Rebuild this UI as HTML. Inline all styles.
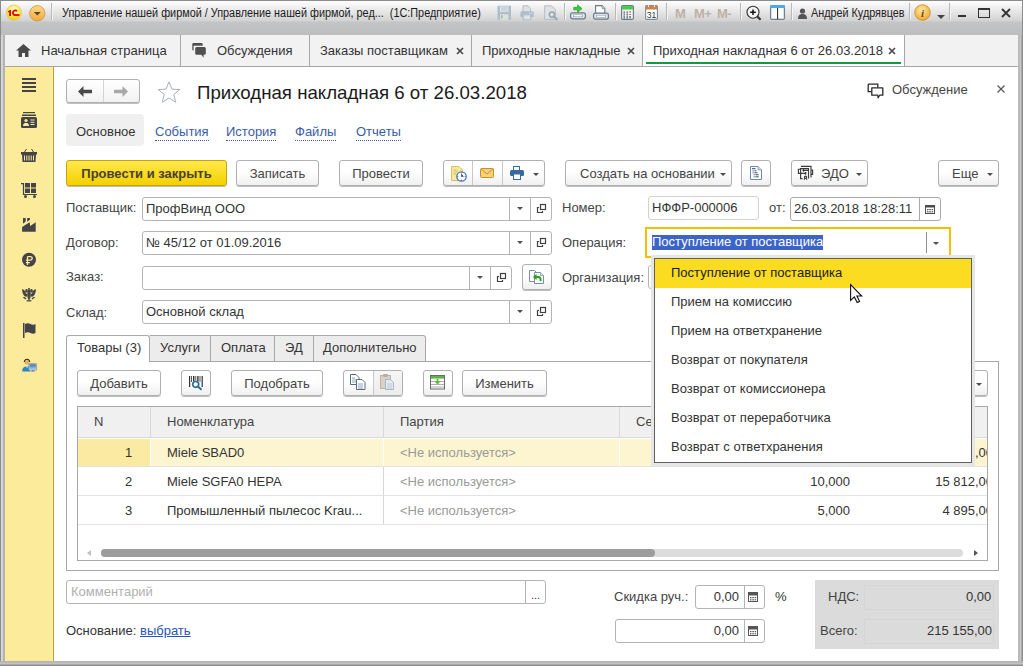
<!DOCTYPE html>
<html><head><meta charset="utf-8">
<style>
*{box-sizing:border-box;margin:0;padding:0}
html,body{width:1023px;height:666px;overflow:hidden;background:#fff}
body{position:relative;font-family:"Liberation Sans",sans-serif;font-size:13px;color:#444}
.a{position:absolute}
svg{position:absolute;overflow:visible}
.t{position:absolute;white-space:nowrap;line-height:16px}
#frame{left:0;top:35px;width:1023px;height:631px;background:linear-gradient(90deg,#8c8c8c 0,#8c8c8c 1px,#d9d9d9 1px,#d0d0d0 3px,#b4b4b4 3px,#b4b4b4 5px,transparent 5px,transparent 1018px,#b4b4b4 1018px,#c8c8c8 1021px,#8c8c8c 1022px)}
#frameb{left:0;top:661px;width:1023px;height:5px;background:linear-gradient(#b0b0b0,#c6c6c6 3px,#8c8c8c 4px)}
#titlebar{left:0;top:0;width:1023px;height:35px;border-left:1px solid #8c8c8c;border-right:1px solid #8c8c8c;background:linear-gradient(#8c8c8c 0,#8c8c8c 1px,#fdfdfd 1px,#f3f3f3 6px,#d2d2d2 21px,#c4c5c7 22px,#bcbdbf 35px)}
#tabbar{left:5px;top:35px;width:1013px;height:32px;background:#f2f2f2;border-bottom:1px solid #a6a6a6}
#content{left:5px;top:67px;width:1013px;height:594px;background:#fff}
#sidebar{left:5px;top:67px;width:49px;height:594px;background:linear-gradient(90deg,#fbeb9a 47px,#fdefb0 47px);border-right:1px solid #b9a22a}
.tabsep{position:absolute;top:35px;width:1px;height:31px;background:#a8a8a8}
.tsep{position:absolute;top:3px;width:1px;height:17px;background:#b8b8b8;box-shadow:1px 0 0 #f4f4f4}
.btn{position:absolute;height:26px;border:1px solid #b0b0b0;border-radius:3px;background:linear-gradient(#fff 0,#fff 45%,#f0f0f0 100%);box-shadow:0 1px 0 rgba(0,0,0,.25);text-align:center;line-height:25px;color:#444;white-space:nowrap}
.inp{position:absolute;height:24px;border:1px solid #b4b4b4;border-radius:3px;background:#fff;line-height:22px;padding-left:3px;color:#333;white-space:nowrap;overflow:hidden}
.vs{position:absolute;top:0;width:1px;height:22px;background:#b4b4b4}
.lbl{position:absolute;white-space:nowrap;line-height:16px;color:#444}
.link{color:#3a5ca8}
.dl{border-bottom:1px dotted #3a5ca8}
.ic{fill:#444448}
.dd{position:absolute;width:0;height:0;border-left:3px solid transparent;border-right:3px solid transparent;border-top:3px solid #4d4d4d}
.item{position:absolute;left:671px;white-space:nowrap;line-height:16px;color:#333}
.cell{position:absolute;white-space:nowrap;line-height:18px;color:#333}
</style></head><body>
<div id="titlebar" class="a"></div>
<div id="frame" class="a"></div>
<div id="tabbar" class="a"></div>
<div id="content" class="a"></div>
<div id="sidebar" class="a"></div>
<div id="frameb" class="a"></div>

<!-- ===== TITLE BAR ===== -->
<svg style="left:4px;top:4px" width="20" height="18" viewBox="0 0 20 18"><defs><radialGradient id="g1" cx="50%" cy="30%" r="70%"><stop offset="0" stop-color="#fffbd0"/><stop offset=".6" stop-color="#fbe84a"/><stop offset="1" stop-color="#f2d000"/></radialGradient></defs><circle cx="9.9" cy="8.6" r="7.5" fill="url(#g1)" stroke="#dcc25a" stroke-width=".7"/><path d="M3.9 7.2 L6 5.9 H7 V11.9 H5.2 V8 L3.9 8.6 Z" fill="#e00000"/><path d="M12.9 7.2 A2.3 2.3 0 1 0 10.4 10.9" fill="none" stroke="#e00000" stroke-width="1.7"/><rect x="9.6" y="10.1" width="5.9" height="1.8" fill="#e00000"/></svg>
<svg style="left:29px;top:5px" width="17" height="17" viewBox="0 0 17 17">
 <defs><linearGradient id="g2" x1="0" y1="0" x2="0" y2="1"><stop offset="0" stop-color="#ffd88a"/><stop offset="1" stop-color="#f5a83a"/></linearGradient></defs>
 <circle cx="8.3" cy="8.3" r="7.7" fill="url(#g2)" stroke="#c8963c" stroke-width=".8"/>
 <path d="M4.8 7 L11.8 7 L8.3 10.6 Z" fill="#5a4630"/>
</svg>
<div class="tsep" style="left:51px"></div>
<div class="t" style="left:62px;top:5px;font-size:12.5px;color:#1a1a1a;transform:scaleX(0.868);transform-origin:0 0">Управление нашей фирмой / Управление нашей фирмой, ред...&nbsp; (1С:Предприятие)</div>

<!-- toolbar icons -->
<svg style="left:497px;top:5px" width="15" height="16" viewBox="0 0 15 16"><rect x="0.5" y="0.8" width="13.5" height="14" fill="#aebdcc"/><rect x="3" y="1.5" width="8.5" height="5.3" fill="#e6e6e6"/><path d="M4 3 H10.5 M4 5 H10.5" stroke="#aebdcc" stroke-width=".9"/><rect x="3" y="9.3" width="8.5" height="5.5" fill="#d8e4d8"/><rect x="4" y="10.3" width="1.6" height="3" fill="#9fb0c0"/></svg>
<svg style="left:520px;top:5px" width="15" height="16" viewBox="0 0 15 16"><path d="M3 0.8 H8 L10.5 3.3 V7 H3 Z" fill="#e2e2e2" stroke="#aebdcc" stroke-width="1"/><rect x="0.4" y="6.3" width="13.4" height="6" rx="1.5" fill="#aebdcc"/><rect x="9" y="7.6" width="1.3" height=".9" fill="#eef2f5"/><rect x="11" y="7.6" width="1.3" height=".9" fill="#eef2f5"/><rect x="3.2" y="9.8" width="7.6" height="5" fill="#e2e2e2" stroke="#aebdcc" stroke-width="1"/></svg>
<svg style="left:544px;top:5px" width="16" height="16" viewBox="0 0 16 16"><path d="M0.7 0.8 H7.5 L11.3 4.6 V14.3 H0.7 Z" fill="#e2e2e2" stroke="#aebdcc" stroke-width="1"/><circle cx="7.9" cy="9.6" r="2.6" fill="#e2e2e2" stroke="#98a6b2" stroke-width="1.6"/><path d="M9.8 11.5 L13.4 14.8" stroke="#98a6b2" stroke-width="1.9"/></svg>
<div class="tsep" style="left:564px"></div>
<svg style="left:569px;top:4px" width="18" height="17" viewBox="0 0 18 17"><path d="M4.8 3.4 H8.6 V1 L13 4.6 L8.6 8.2 V5.8 H4.8 Z" fill="#34d034" stroke="#1e9a1e" stroke-width=".7"/><rect x="1.6" y="8.8" width="14.8" height="6" rx="2" fill="#e4e8ec" stroke="#6a7888" stroke-width="1.2"/><rect x="4.3" y="10.8" width="9.4" height="2" fill="#fff" stroke="#8a98a6" stroke-width=".6"/></svg>
<svg style="left:592px;top:4px" width="18" height="17" viewBox="0 0 18 17"><path d="M3.6 1.6 H10 L12.8 4.4 V9.5 H3.6 Z" fill="#fff" stroke="#6a7888" stroke-width="1.1"/><path d="M10 1.6 V4.4 H12.8" fill="#cfd8e0" stroke="#6a7888" stroke-width=".7"/><rect x="1.6" y="9.2" width="14.8" height="6" rx="2" fill="#e4e8ec" stroke="#6a7888" stroke-width="1.2"/><rect x="4.3" y="11.2" width="9.4" height="2" fill="#fff" stroke="#8a98a6" stroke-width=".6"/></svg>
<div class="tsep" style="left:615px"></div>
<svg style="left:621px;top:5px" width="13" height="15" viewBox="0 0 13 15"><rect x="0.6" y="0.6" width="11.8" height="13.8" rx="1.2" fill="#eef2f6" stroke="#6a7a8a" stroke-width="1.1"/><rect x="1.1" y="1.1" width="10.8" height="3.4" fill="#44cc44"/><rect x="2.5" y="6.6" width="1.5" height="1" fill="#3a3a3a"/><rect x="5.5" y="6.6" width="1.5" height="1" fill="#3a3a3a"/><rect x="2.5" y="8.6" width="1.5" height="1" fill="#3a3a3a"/><rect x="5.5" y="8.6" width="1.5" height="1" fill="#3a3a3a"/><rect x="2.5" y="10.6" width="1.5" height="1" fill="#3a3a3a"/><rect x="5.5" y="10.6" width="1.5" height="1" fill="#3a3a3a"/><rect x="2.5" y="12.4" width="1.5" height="1" fill="#3a3a3a"/><rect x="5.5" y="12.4" width="1.5" height="1" fill="#3a3a3a"/><rect x="8.5" y="6.1" width="1.1" height="1.7" fill="#e03030"/><rect x="8.5" y="9" width="1.1" height="1" fill="#3a3a3a"/><rect x="8.5" y="11" width="1.1" height="2.2" fill="#3a3a3a"/></svg>
<svg style="left:645px;top:5px" width="13" height="15" viewBox="0 0 13 15"><rect x="0.6" y="0.6" width="11.8" height="13.8" rx="1.2" fill="#fff" stroke="#7a8a9a" stroke-width="1.1"/><path d="M0.6 4.6 V1.8 C0.6 1.1 1.1 0.6 1.8 0.6 H11.2 C11.9 0.6 12.4 1.1 12.4 1.8 V4.6 Z" fill="#c8844c"/><rect x="3" y="0.3" width="1" height="1.8" fill="#fff"/><rect x="9" y="0.3" width="1" height="1.8" fill="#fff"/><text x="6.5" y="12.8" font-size="8.5" font-family="Liberation Sans" text-anchor="middle" fill="#333">31</text></svg>
<div class="tsep" style="left:666px"></div>
<div class="t" style="left:675px;top:6px;font-size:13px;font-weight:bold;color:#bdb1a6">M</div>
<div class="t" style="left:694px;top:6px;font-size:13px;font-weight:bold;color:#bdb1a6;letter-spacing:-0.5px">M+</div>
<div class="t" style="left:717px;top:6px;font-size:13px;font-weight:bold;color:#bdb1a6;letter-spacing:-0.5px">M-</div>
<div class="tsep" style="left:740px"></div>
<svg style="left:746px;top:5px" width="16" height="16" viewBox="0 0 16 16"><circle cx="7" cy="7.2" r="6" fill="#f4f4f4" stroke="#333" stroke-width="1.1"/><path d="M4.2 7.2 H9.8 M7 4.4 V10" stroke="#111" stroke-width="1.5"/><path d="M11.2 11.4 L14.6 14.8" stroke="#333" stroke-width="2.2"/></svg>
<svg style="left:770px;top:5px" width="15" height="15" viewBox="0 0 15 15"><rect x="0.6" y="0.6" width="13.8" height="13.8" rx="1.2" fill="#fafafa" stroke="#6f7f8c" stroke-width="1.2"/><path d="M0 3 V1.5 C0 0.7 0.7 0 1.5 0 H13.5 C14.3 0 15 0.7 15 1.5 V3 Z" fill="#4ea6ec"/><rect x="7" y="3" width="1.1" height="11.4" fill="#3a3a3a"/></svg>
<div class="tsep" style="left:791px"></div>
<svg style="left:798px;top:8px" width="9" height="11" viewBox="0 0 9 11"><circle cx="4.5" cy="3" r="2.6" fill="#555"/><path d="M0 11 C0 7 2 6 4.5 6 C7 6 9 7 9 11 Z" fill="#555"/></svg>
<div class="t" style="left:811px;top:5px;font-size:12.5px;color:#222;transform:scaleX(0.865);transform-origin:0 0">Андрей Кудрявцев</div>
<div class="tsep" style="left:909px"></div>
<svg style="left:914px;top:4px" width="17" height="17" viewBox="0 0 17 17"><defs><radialGradient id="g3" cx="45%" cy="35%" r="65%"><stop offset="0" stop-color="#ffe9a8"/><stop offset="1" stop-color="#f0a82c"/></radialGradient></defs><circle cx="8.5" cy="8.5" r="7.8" fill="url(#g3)" stroke="#c48a2a" stroke-width=".8"/><text x="8.5" y="13" font-size="11" font-family="Liberation Serif" font-style="italic" font-weight="bold" text-anchor="middle" fill="#6a4a10">i</text></svg>
<div class="dd" style="left:937px;top:15px;border-left-width:4px;border-right-width:4px;border-top-width:4px;border-top-color:#444"></div>
<div class="tsep" style="left:949px"></div>
<div class="a" style="left:958px;top:15px;width:8px;height:2px;background:#333"></div>
<div class="a" style="left:978px;top:8px;width:12px;height:10px;border:1.5px solid #333;border-top-width:2px"></div>
<svg style="left:1001px;top:8px" width="10" height="10" viewBox="0 0 10 10"><path d="M1 1 L9 9 M9 1 L1 9" stroke="#333" stroke-width="1.8"/></svg>

<!-- ===== SECTION TABS ===== -->
<svg style="left:16px;top:44px" width="15" height="13" viewBox="0 0 15 13"><path d="M7.5 0 L15 6.5 H12.5 V13 H9 V9 H6 V13 H2.5 V6.5 H0 Z" fill="#4a4a4a"/></svg>
<div class="t" style="left:41px;top:43px;color:#333">Начальная страница</div>
<div class="tabsep" style="left:180px"></div>
<svg style="left:186px;top:38px" width="26" height="24" viewBox="0 0 26 24"><rect x="6.3" y="5" width="10.4" height="7.6" rx="1.3" fill="#505050"/><rect x="7.6" y="7.7" width="9.5" height="5.5" fill="#f2f2f2"/><rect x="8.3" y="8.1" width="12.4" height="9.5" rx="1.8" fill="#f2f2f2"/><rect x="9.2" y="9" width="10.6" height="7.7" rx="1.5" fill="#505050"/><path d="M14.8 16.3 L17.7 19.8 L17.5 16.3 Z" fill="#505050"/></svg>
<div class="t" style="left:217px;top:43px;color:#333">Обсуждения</div>
<div class="tabsep" style="left:309px"></div>
<div class="t" style="left:320px;top:43px;color:#333">Заказы поставщикам</div>
<svg style="left:456px;top:47px" width="8" height="8" viewBox="0 0 8 8"><path d="M1 1 L7 7 M7 1 L1 7" stroke="#4a4a4a" stroke-width="1.7"/></svg>
<div class="tabsep" style="left:471px"></div>
<div class="t" style="left:482px;top:43px;color:#333">Приходные накладные</div>
<svg style="left:627px;top:47px" width="8" height="8" viewBox="0 0 8 8"><path d="M1 1 L7 7 M7 1 L1 7" stroke="#4a4a4a" stroke-width="1.7"/></svg>
<div class="tabsep" style="left:642px"></div>
<div class="a" style="left:643px;top:35px;width:261px;height:31px;background:#fff"></div>
<div class="a" style="left:646px;top:62px;width:255px;height:2px;background:#149a3e"></div>
<div class="t" style="left:653px;top:43px;color:#333">Приходная накладная 6 от 26.03.2018</div>
<svg style="left:888px;top:47px" width="8" height="8" viewBox="0 0 8 8"><path d="M1 1 L7 7 M7 1 L1 7" stroke="#4a4a4a" stroke-width="1.7"/></svg>
<div class="tabsep" style="left:904px"></div>

<!-- ===== SIDEBAR ICONS ===== -->
<svg style="left:22px;top:78px" width="14" height="14" viewBox="0 0 14 14"><g class="ic"><rect y="0" width="14" height="2"/><rect y="4" width="14" height="2"/><rect y="8" width="14" height="2"/><rect y="12" width="14" height="2"/></g></svg>
<svg style="left:21px;top:112px" width="16" height="16" viewBox="0 0 16 16"><g class="ic"><rect x="2" y="0" width="12" height="1.2"/><rect x="1" y="2.5" width="14" height="1.5"/><rect x="0" y="5" width="16" height="11" rx="1.5"/></g><circle cx="5" cy="8.5" r="1.6" fill="#fbeb9a"/><path d="M2 14 C2 11.5 3.5 11 5 11 C6.5 11 8 11.5 8 14 Z" fill="#fbeb9a"/><rect x="9.5" y="7.5" width="4" height="1" fill="#fbeb9a"/><rect x="9.5" y="9.8" width="4" height="1" fill="#fbeb9a"/><rect x="9.5" y="12" width="4" height="1" fill="#fbeb9a"/></svg>
<svg style="left:21px;top:148px" width="16" height="15" viewBox="0 0 16 15"><path d="M5.5 1 L3.5 4 M10.5 1 L12.5 4" stroke="#404048" stroke-width="1"/><g class="ic"><rect x="0" y="4" width="16" height="2.5"/><path d="M1 6 H15 L14.5 14 H1.5 Z"/></g><g fill="#fbeb9a"><rect x="3" y="7.5" width="1" height="5"/><rect x="5.3" y="7.5" width="1" height="5"/><rect x="7.5" y="7.5" width="1" height="5"/><rect x="9.7" y="7.5" width="1" height="5"/><rect x="12" y="7.5" width="1" height="5"/></g></svg>
<svg style="left:21px;top:183px" width="16" height="15" viewBox="0 0 16 15"><path d="M0 0.6 H2.5 V11.5 H16" stroke="#404048" stroke-width="1.2" fill="none"/><g class="ic"><rect x="4" y="0" width="5" height="4.5"/><rect x="10" y="0" width="5" height="4.5"/><rect x="4" y="5.5" width="5" height="4.5"/><rect x="10" y="5.5" width="5" height="4.5"/><circle cx="4.5" cy="13.5" r="1.5"/><circle cx="13.5" cy="13.5" r="1.5"/></g></svg>
<svg style="left:22px;top:218px" width="14" height="14" viewBox="0 0 14 14"><g class="ic"><path d="M1 0 H3.7 V3.6 L1 5.7 Z"/><path d="M5.1 0 H7.9 V1.8 L5.1 3.8 Z"/><path d="M0.1 9 L7.6 4.2 L8.2 8 L13.7 4.2 V13.7 H0.1 Z"/></g></svg>
<svg style="left:20px;top:250px" width="18" height="18" viewBox="0 0 18 18"><circle class="ic" cx="9" cy="9.8" r="7"/><path d="M7.5 6.6 V14.9 M7.5 6.6 H10 C11.5 6.6 12.2 7.3 12.2 8.3 C12.2 9.3 11.5 10.2 10 10.2 H5.9 M5.9 12.6 H9.9" stroke="#fbeb9a" stroke-width="1.25" fill="none"/></svg>
<svg style="left:19px;top:284px" width="20" height="20" viewBox="0 0 20 20"><g fill="#444448"><path d="M3 5 C4.5 5.5 5.5 6.5 6.5 7.5 L8.6 7.5 L8.6 12.6 L6.8 12.8 C4.8 12 3.4 9.8 3 5 Z"/><path d="M17 5 C15.5 5.5 14.5 6.5 13.5 7.5 L11.4 7.5 L11.4 12.6 L13.2 12.8 C15.2 12 16.6 9.8 17 5 Z"/><rect x="9.2" y="4" width="1.6" height="1.8"/><rect x="6.6" y="5" width="1.6" height="2"/><rect x="11.8" y="5" width="1.6" height="2"/><rect x="6" y="6.5" width="8" height="1.3"/><rect x="8.6" y="5.5" width="2.8" height="9"/><path d="M3.6 13 L5.5 13 L7.5 14.6 L6.4 15.6 Z"/><path d="M16.4 13 L14.5 13 L12.5 14.6 L13.6 15.6 Z"/><rect x="9.3" y="14" width="1.4" height="2.5"/><rect x="7.6" y="16.2" width="4.8" height="1.2"/></g><path d="M6 8.4 L8.4 8.4 L8 10 Z M14 8.4 L11.6 8.4 L12 10 Z" fill="#fbeb9a"/></svg>
<svg style="left:23px;top:323px" width="13" height="15" viewBox="0 0 13 15"><rect class="ic" x="0" y="0" width="1.5" height="15"/><path class="ic" d="M2 1 C4 0 6 0 7.5 1 C9 2 11 2 12.5 1 V10 C11 11 9 11 7.5 10 C6 9 4 9 2 10 Z"/></svg>
<svg style="left:22px;top:358px" width="15" height="14" viewBox="0 0 15 14"><defs><linearGradient id="g5" x1="0" y1="0" x2="0" y2="1"><stop offset="0" stop-color="#3a70b0"/><stop offset="1" stop-color="#a8d0f0"/></linearGradient></defs><circle cx="5" cy="3.9" r="2.6" fill="#e8b060"/><path d="M2.2 4 A2.8 2.8 0 0 1 7.8 4" fill="none" stroke="#2a2218" stroke-width="1"/><path d="M0.2 13.5 C0.2 9.8 2 8.6 5 8.6 C7 8.6 8 9 8 10 V13.5 Z" fill="#2a88c8"/><path d="M4.3 8.6 L5 10.4 L5.7 8.6 Z" fill="#fff"/><rect x="6.8" y="5.6" width="7.8" height="6.6" rx=".6" fill="#b8c4d0" stroke="#7a8896" stroke-width=".6"/><rect x="7.6" y="6.4" width="6.2" height="5" fill="url(#g5)"/><rect x="9.9" y="12.2" width="1.8" height="1" fill="#6a7888"/><rect x="8.6" y="13" width="4.4" height=".9" fill="#98a6b2"/></svg>

<!-- ===== FORM HEADER ===== -->
<div class="btn" style="left:66px;top:79px;width:74px;height:24px;background:linear-gradient(#fff,#f2f2f2)"></div>
<div class="a" style="left:103px;top:80px;width:1px;height:22px;background:#d4d4d4"></div>
<svg style="left:78px;top:86px" width="14" height="11" viewBox="0 0 14 11"><path d="M0 5.5 L5.5 0 V3.8 H14 V7.2 H5.5 V11 Z" fill="#4a4a4a"/></svg>
<svg style="left:114px;top:86px" width="14" height="11" viewBox="0 0 14 11"><path d="M14 5.5 L8.5 0 V3.8 H0 V7.2 H8.5 V11 Z" fill="#a8a8a8"/></svg>
<svg style="left:157px;top:81px" width="24" height="23" viewBox="0 0 24 23"><path d="M12 0.9 L14.95 8.2 L22.8 8.55 L16.7 13.5 L18.8 21.3 L12 17 L5.2 21.3 L7.3 13.5 L1.2 8.55 L9.05 8.2 Z" fill="#fff" stroke="#a9b1ba" stroke-width="1"/></svg>
<div class="t" style="left:197px;top:82px;font-size:18.67px;line-height:22px;color:#1a1a1a">Приходная накладная 6 от 26.03.2018</div>

<svg style="left:867px;top:83px" width="17" height="17" viewBox="0 0 17 17"><path d="M1.2 1.2 H10.8 V4.6 M4.6 8.6 H1.2 V1.2" fill="none" stroke="#2a2a2a" stroke-width="1.3"/><path d="M4.8 4.8 H15.8 V12.2 H12.6 L11.2 14.8 L10.6 12.2 H4.8 Z" fill="#fff" stroke="#2a2a2a" stroke-width="1.3" stroke-linejoin="round"/></svg>
<div class="t" style="left:892px;top:82px;color:#444">Обсуждение</div>
<svg style="left:997px;top:85px" width="8" height="8" viewBox="0 0 8 8"><path d="M0.5 0.5 L7.5 7.5 M7.5 0.5 L0.5 7.5" stroke="#555" stroke-width="1.2"/></svg>

<!-- form tabs -->
<div class="a" style="left:66px;top:114px;width:78px;height:32px;background:#f0f0f0;border-radius:4px"></div>
<div class="t" style="left:76px;top:124px;color:#333">Основное</div>
<div class="t link dl" style="left:155px;top:124px">События</div>
<div class="t link dl" style="left:226px;top:124px">История</div>
<div class="t link dl" style="left:295px;top:124px">Файлы</div>
<div class="t link dl" style="left:356px;top:124px">Отчеты</div>

<!-- ===== COMMAND BAR ===== -->
<div class="btn" style="left:66px;top:160px;width:161px;background:linear-gradient(#ffe94e,#f4d000);border-color:#c8a600;font-weight:bold;color:#4a4030">Провести и закрыть</div>
<div class="btn" style="left:236px;top:160px;width:83px">Записать</div>
<div class="btn" style="left:339px;top:160px;width:84px">Провести</div>
<div class="btn" style="left:443px;top:160px;width:102px"></div>
<div class="a" style="left:472px;top:161px;width:1px;height:24px;background:#c8c8c8"></div>
<div class="a" style="left:502px;top:161px;width:1px;height:24px;background:#c8c8c8"></div>
<svg style="left:451px;top:166px" width="16" height="16" viewBox="0 0 16 16"><path d="M0.5 0.5 H8 L11.5 4 V14.5 H0.5 Z" fill="#f6e7a0" stroke="#d9c060"/><g stroke="#d0b850" stroke-width=".8"><path d="M2.5 4 H6 M2.5 6 H7 M2.5 8 H5"/></g><circle cx="10.5" cy="10.5" r="4.7" fill="#fff" stroke="#3a78c0" stroke-width="1.3"/><path d="M10.5 8 V10.5 H12.5" stroke="#3a78c0" stroke-width="1"/><g fill="#e03030"><circle cx="10.5" cy="6.8" r=".6"/><circle cx="10.5" cy="14.2" r=".6"/><circle cx="6.8" cy="10.5" r=".6"/><circle cx="14.2" cy="10.5" r=".6"/></g></svg>
<svg style="left:480px;top:168px" width="14" height="10" viewBox="0 0 14 10"><rect x="0.5" y="0.5" width="13" height="9" rx="1" fill="#f7d27a" stroke="#c8902a"/><path d="M1 1 L7 6 L13 1" fill="none" stroke="#c8902a"/></svg>
<svg style="left:510px;top:166px" width="14" height="14" viewBox="0 0 14 14"><rect x="3.5" y="0.5" width="6" height="4" fill="#fff" stroke="#3a6a9a"/><rect x="0" y="4" width="14" height="6" rx="1.5" fill="#3a6a9a"/><rect x="3.5" y="8" width="7" height="5.5" fill="#fff" stroke="#3a6a9a"/></svg>
<div class="dd" style="left:533px;top:173px"></div>

<div class="btn" style="left:565px;top:160px;width:167px;text-align:left;padding-left:14px">Создать на основании</div>
<div class="dd" style="left:720px;top:173px"></div>
<div class="btn" style="left:741px;top:160px;width:30px"></div>
<svg style="left:750px;top:166px" width="13" height="14" viewBox="0 0 13 14"><path d="M0.5 0.5 H8 L11.5 4 V13.5 H0.5 Z" fill="#fff" stroke="#7088a8"/><path d="M8 0.5 V4 H11.5" fill="#c8d4e0" stroke="#7088a8" stroke-width=".6"/><g fill="#2e4a70"><rect x="2" y="2.2" width="3.5" height="1"/><rect x="2.6" y="4.3" width="1" height="1"/><rect x="4.4" y="4.3" width="2" height="1"/><rect x="2.6" y="6.3" width="1" height="1"/><rect x="4.4" y="6.3" width="3" height="1"/><rect x="3.6" y="8.3" width="1" height="1"/><rect x="5.4" y="8.3" width="3.2" height="1"/><rect x="3.6" y="10.3" width="1" height="1"/><rect x="5.4" y="10.3" width="3.2" height="1"/></g></svg>
<div class="btn" style="left:791px;top:160px;width:77px;text-align:left;padding-left:29px">ЭДО</div>
<svg style="left:794px;top:162px" width="24" height="22" viewBox="0 0 24 22"><g fill="none" stroke="#3a3a3a" stroke-width="1.15"><path d="M7 4.3 H17 V15.5"/><path d="M8.6 16.6 H6.6 V6.6 H14.5 V16.6"/><path d="M6.6 7.2 H4.4 V11.4 H6.6"/><path d="M17 8 H18.6 V12.4 H17"/><path d="M8.6 8.4 H14.5 M8.6 8.4 L10 7.2 M8.6 8.4 L10 9.6"/><path d="M6.6 11.3 H12.4 M12.4 11.3 L11 10.1 M12.4 11.3 L11 12.5"/><circle cx="11.5" cy="15.2" r="1.1"/><path d="M10.8 16.2 L10.1 17.8 M12.2 16.2 L12.9 17.8"/></g></svg>
<div class="dd" style="left:856px;top:173px"></div>
<div class="btn" style="left:938px;top:160px;width:61px;text-align:left;padding-left:13px">Еще</div>
<div class="dd" style="left:987px;top:173px"></div>

<!-- ===== FIELDS ===== -->
<div class="lbl" style="left:66px;top:200px">Поставщик:</div>
<div class="inp" style="left:142px;top:197px;width:410px">ПрофВинд ООО<div class="vs" style="left:366px"></div><div class="vs" style="left:387px"></div></div>
<div class="dd" style="left:517px;top:207px"></div>
<svg style="left:536px;top:203px" width="10" height="10" viewBox="0 0 10 10"><rect x="4.5" y="1.5" width="5" height="5" fill="none" stroke="#404040" stroke-width="1.2"/><path d="M3 4.5 H1.5 V9.5 H6.5 V8" fill="none" stroke="#404040" stroke-width="1.2"/></svg>

<div class="lbl" style="left:66px;top:235px">Договор:</div>
<div class="inp" style="left:142px;top:231px;width:410px">№ 45/12 от 01.09.2016<div class="vs" style="left:366px"></div><div class="vs" style="left:387px"></div></div>
<div class="dd" style="left:517px;top:241px"></div>
<svg style="left:536px;top:237px" width="10" height="10" viewBox="0 0 10 10"><rect x="4.5" y="1.5" width="5" height="5" fill="none" stroke="#404040" stroke-width="1.2"/><path d="M3 4.5 H1.5 V9.5 H6.5 V8" fill="none" stroke="#404040" stroke-width="1.2"/></svg>

<div class="lbl" style="left:66px;top:269px">Заказ:</div>
<div class="inp" style="left:142px;top:266px;width:370px"><div class="vs" style="left:326px"></div><div class="vs" style="left:347px"></div></div>
<div class="dd" style="left:477px;top:276px"></div>
<svg style="left:496px;top:272px" width="10" height="10" viewBox="0 0 10 10"><rect x="4.5" y="1.5" width="5" height="5" fill="none" stroke="#404040" stroke-width="1.2"/><path d="M3 4.5 H1.5 V9.5 H6.5 V8" fill="none" stroke="#404040" stroke-width="1.2"/></svg>
<div class="btn" style="left:522px;top:264px;width:30px"></div>
<svg style="left:528px;top:269px" width="18" height="17" viewBox="0 0 18 17"><path d="M1.5 1.5 H6.5 L8.5 3.5 V12.5 H1.5 Z" fill="#fff" stroke="#7890a2"/><path d="M6.5 3.5 H12.5 L15.5 6.5 V14.5 H6.5 Z" fill="#fff" stroke="#7890a2"/><path d="M12.5 3.5 V6.5 H15.5" fill="#dfe6ec" stroke="#7890a2" stroke-width=".7"/><path d="M4.8 8 L8.6 4.9 V11.1 Z" fill="#2ea02a"/><path d="M8 8 H10.3 C11.8 8 12.6 9 12.6 10.6 V12" fill="none" stroke="#2ea02a" stroke-width="1.9"/></svg>

<div class="lbl" style="left:66px;top:305px">Склад:</div>
<div class="inp" style="left:142px;top:300px;width:410px">Основной склад<div class="vs" style="left:366px"></div><div class="vs" style="left:387px"></div></div>
<div class="dd" style="left:517px;top:310px"></div>
<svg style="left:536px;top:306px" width="10" height="10" viewBox="0 0 10 10"><rect x="4.5" y="1.5" width="5" height="5" fill="none" stroke="#404040" stroke-width="1.2"/><path d="M3 4.5 H1.5 V9.5 H6.5 V8" fill="none" stroke="#404040" stroke-width="1.2"/></svg>

<div class="lbl" style="left:562px;top:200px">Номер:</div>
<div class="inp" style="left:648px;top:196px;width:111px;border-color:#d2d2d2">НФФР-000006</div>
<div class="lbl" style="left:769px;top:200px">от:</div>
<div class="inp" style="left:790px;top:197px;width:151px;border-color:#a8a8a8;padding-left:3px">26.03.2018 18:28:11<div class="vs" style="left:128px;background:#a8a8a8"></div></div>
<svg style="left:925px;top:204px" width="10" height="10" viewBox="0 0 10 10"><rect x="0.5" y="1.5" width="9" height="8" fill="#fff" stroke="#4d4d4d"/><rect x="0" y="1" width="10" height="2.5" fill="#4d4d4d"/><g fill="#4d4d4d"><rect x="2" y="5" width="1.5" height="1.2"/><rect x="4.3" y="5" width="1.5" height="1.2"/><rect x="6.6" y="5" width="1.5" height="1.2"/><rect x="2" y="7.2" width="1.5" height="1.2"/><rect x="4.3" y="7.2" width="1.5" height="1.2"/><rect x="6.6" y="7.2" width="1.5" height="1.2"/></g></svg>

<div class="lbl" style="left:562px;top:235px">Операция:</div>
<div class="a" style="left:645px;top:227px;width:306px;height:31px;border:2px solid #f5c000;background:#fff"></div>
<div class="a" style="left:926px;top:232px;width:1px;height:21px;background:#909090"></div>
<div class="dd" style="left:933px;top:242px"></div>
<div class="a" style="left:652px;top:235px;width:171px;height:15px;background:#3c64c8"></div>
<div class="t" style="left:652px;top:234px;color:#fff">Поступление от поставщика</div>

<div class="lbl" style="left:562px;top:270px">Организация:</div>
<div class="inp" style="left:648px;top:265px;width:40px"></div>

<!-- ===== TABLE PANEL ===== -->
<div class="a" style="left:66px;top:361px;width:933px;height:210px;border:1px solid #a8a8a8"></div>
<div class="a" style="left:66px;top:335px;width:84px;height:27px;border:1px solid #a8a8a8;border-bottom:none;border-radius:3px 3px 0 0;background:#fff"></div>
<div class="a" style="left:150px;top:335px;width:61px;height:27px;border:1px solid #a8a8a8;border-left:none;background:#ececec"></div>
<div class="a" style="left:211px;top:335px;width:64px;height:27px;border:1px solid #a8a8a8;border-left:none;background:#ececec"></div>
<div class="a" style="left:275px;top:335px;width:39px;height:27px;border:1px solid #a8a8a8;border-left:none;background:#ececec"></div>
<div class="a" style="left:314px;top:335px;width:112px;height:27px;border:1px solid #a8a8a8;border-left:none;border-radius:0 3px 0 0;background:#ececec"></div>
<div class="a" style="left:67px;top:361px;width:82px;height:2px;background:#fff"></div>
<div class="t" style="left:77px;top:340px;color:#333">Товары (3)</div>
<div class="t" style="left:160px;top:340px;color:#333">Услуги</div>
<div class="t" style="left:221px;top:340px;color:#333">Оплата</div>
<div class="t" style="left:285px;top:340px;color:#333">ЭД</div>
<div class="t" style="left:323px;top:340px;color:#333">Дополнительно</div>

<div class="btn" style="left:77px;top:370px;width:84px">Добавить</div>
<div class="btn" style="left:181px;top:370px;width:30px"></div>
<svg style="left:188px;top:375px" width="16" height="16" viewBox="0 0 16 16"><g fill="#333"><rect x="1" y="1" width="1.2" height="11"/><rect x="3.2" y="1" width="0.8" height="6"/><rect x="5" y="1" width="1.4" height="5"/><rect x="7.4" y="1" width="0.8" height="4"/><rect x="9.2" y="1" width="1.4" height="5"/><rect x="11.6" y="1" width="0.8" height="6"/><rect x="13.6" y="1" width="1.2" height="11"/></g><circle cx="7.7" cy="9.3" r="3" fill="#fff" stroke="#2a6e9c" stroke-width="1.7"/><path d="M9.8 11.4 L13.6 14.8" stroke="#2a6e9c" stroke-width="2"/></svg>
<div class="btn" style="left:231px;top:370px;width:92px">Подобрать</div>
<div class="btn" style="left:343px;top:370px;width:60px"></div>
<div class="a" style="left:373px;top:371px;width:29px;height:24px;background:linear-gradient(#f6f6f6,#ececec);border-left:1px solid #c8c8c8;border-radius:0 2px 2px 0"></div>
<svg style="left:350px;top:374px" width="16" height="17" viewBox="0 0 16 17"><path d="M0.5 0.5 H6 L9 3.5 V10.5 H0.5 Z" fill="#fff" stroke="#5a6a80"/><path d="M2 4 H5 M2 6 H7 M2 8 H7" stroke="#7a8aa0" stroke-width=".8"/><path d="M6.5 5.5 H12 L15 8.5 V15.5 H6.5 Z" fill="#fff" stroke="#5a6a80"/><path d="M8 10 H13 M8 12 H13 M8 14 H13" stroke="#7a8aa0" stroke-width=".8"/></svg>
<svg style="left:380px;top:374px" width="15" height="17" viewBox="0 0 15 17"><rect x="0.5" y="1.5" width="10" height="13" fill="#d9d2cc" stroke="#bfb2a8"/><rect x="3" y="0" width="5" height="3" rx="1" fill="#b9aca2"/><path d="M5.5 5.5 H10.5 L13.5 8.5 V15.5 H5.5 Z" fill="#e6eaee" stroke="#a9b5c2"/><path d="M7 10 H12 M7 12 H12 M7 14 H12" stroke="#b8c2cc" stroke-width=".8"/></svg>
<div class="btn" style="left:423px;top:370px;width:30px"></div>
<svg style="left:430px;top:375px" width="16" height="15" viewBox="0 0 16 15"><rect x="0.5" y="0.5" width="14" height="13.5" fill="#fff" stroke="#6a6a6a"/><rect x="1" y="1" width="13" height="2.6" fill="#5cb83c"/><path d="M1 6.5 H14 M1 9.5 H14 M1 12 H14" stroke="#9a9a9a" stroke-width=".8"/><rect x="6.6" y="4" width="1.8" height="3" fill="#5cb83c"/><path d="M4.5 6.5 H10.5 L7.5 9.5 Z" fill="#5cb83c"/></svg>
<div class="btn" style="left:462px;top:370px;width:85px">Изменить</div>
<div class="btn" style="left:957px;top:370px;width:31px"></div>
<div class="dd" style="left:976px;top:383px"></div>

<!-- table -->
<div class="a" style="left:77px;top:406px;width:911px;height:155px;border:1px solid #a8a8a8;background:#fff"></div>
<div class="a" style="left:78px;top:407px;width:909px;height:31px;background:#f0f0f0;border-bottom:1px solid #d9d9d9"></div>
<div class="a" style="left:150px;top:407px;width:1px;height:30px;background:#d9d9d9"></div>
<div class="a" style="left:383px;top:407px;width:1px;height:30px;background:#d9d9d9"></div>
<div class="a" style="left:619px;top:407px;width:1px;height:30px;background:#d9d9d9"></div>
<div class="cell" style="left:94px;top:413px;color:#444">N</div>
<div class="cell" style="left:167px;top:413px;color:#444">Номенклатура</div>
<div class="cell" style="left:400px;top:413px;color:#444">Партия</div>
<div class="cell" style="left:636px;top:413px;color:#444">Се</div>

<div class="a" style="left:78px;top:439px;width:909px;height:27px;background:#fdf5d0"></div>
<div class="a" style="left:78px;top:439px;width:72px;height:27px;background:#fbeba2"></div>
<div class="a" style="left:150px;top:439px;width:1px;height:27px;background:#fff"></div>
<div class="a" style="left:383px;top:439px;width:1px;height:27px;background:#fff"></div>
<div class="a" style="left:619px;top:439px;width:1px;height:27px;background:#fff"></div>
<div class="a" style="left:383px;top:466px;width:1px;height:59px;background:#d6d6d6"></div>
<div class="a" style="left:78px;top:466px;width:909px;height:1px;background:#e2e2e2"></div>
<div class="a" style="left:78px;top:495px;width:909px;height:1px;background:#e2e2e2"></div>
<div class="a" style="left:78px;top:524px;width:909px;height:1px;background:#e2e2e2"></div>
<div class="cell" style="left:125px;top:444px">1</div>
<div class="cell" style="left:167px;top:444px">Miele SBAD0</div>
<div class="cell" style="left:400px;top:444px;color:#9a9a9a">&lt;Не используется&gt;</div>

<div class="cell" style="left:125px;top:473px">2</div>
<div class="cell" style="left:167px;top:473px">Miele SGFA0 HEPA</div>
<div class="cell" style="left:400px;top:473px;color:#9a9a9a">&lt;Не используется&gt;</div>
<div class="cell" style="left:125px;top:502px">3</div>
<div class="cell" style="left:167px;top:502px">Промышленный пылесос Krau...</div>
<div class="cell" style="left:400px;top:502px;color:#9a9a9a">&lt;Не используется&gt;</div>
<div class="a" style="left:700px;top:439px;width:287px;height:86px;overflow:hidden">
<div class="cell" style="right:137px;top:34px;text-align:right">10,000</div>
<div class="cell" style="right:137px;top:63px;text-align:right">5,000</div>
<div class="cell" style="right:-6px;top:5px;text-align:right">194 448,00</div>
<div class="cell" style="right:-6px;top:34px;text-align:right">15 812,00</div>
<div class="cell" style="right:-6px;top:63px;text-align:right">4 895,00</div>
</div>
<div class="a" style="left:988px;top:407px;width:9px;height:150px;background:#fff"></div>
<div class="a" style="left:987px;top:406px;width:1px;height:155px;background:#a8a8a8"></div>
<!-- scrollbar -->
<div class="a" style="left:101px;top:549px;width:862px;height:8px;background:#dcdcdc;border-radius:4px"></div>
<div class="a" style="left:101px;top:549px;width:554px;height:8px;background:#9c9c9c;border-radius:4px"></div>
<div class="a" style="left:87px;top:550px;width:0;height:0;border-top:3px solid transparent;border-bottom:3px solid transparent;border-right:4px solid #c0c0c0"></div>
<div class="a" style="left:974px;top:550px;width:0;height:0;border-top:3px solid transparent;border-bottom:3px solid transparent;border-left:4px solid #555"></div>

<!-- ===== DROPDOWN LIST ===== -->
<div class="a" style="left:651px;top:255px;width:324px;height:211px;background:#e6e6e6"></div>
<div class="a" style="left:654px;top:258px;width:318px;height:205px;border:1px solid #606060;background:#fff"></div>
<div class="a" style="left:655px;top:259px;width:316px;height:29px;background:#fcdc20"></div>
<div class="item" style="top:265px;color:#1a1a1a">Поступление от поставщика</div>
<div class="item" style="top:294px">Прием на комиссию</div>
<div class="item" style="top:323px">Прием на ответхранение</div>
<div class="item" style="top:352px">Возврат от покупателя</div>
<div class="item" style="top:381px">Возврат от комиссионера</div>
<div class="item" style="top:410px">Возврат от переработчика</div>
<div class="item" style="top:439px">Возврат с ответхранения</div>
<!-- cursor -->
<svg style="left:850px;top:284px" width="14" height="21" viewBox="0 0 14 21"><path d="M0.6 0.6 V16.4 L4.3 12.9 L7.2 18.6 L9.6 17.5 L6.9 12 H11.7 Z" fill="#fff" stroke="#111" stroke-width="1.1" stroke-linejoin="miter"/></svg>

<!-- ===== FOOTER ===== -->
<div class="inp" style="left:66px;top:580px;width:480px;color:#b0b0b0;padding-left:4px">Комментарий<div class="vs" style="left:458px"></div></div>
<div class="t" style="left:531px;top:587px;font-size:11px;color:#333">...</div>
<div class="t" style="left:66px;top:623px;color:#333">Основание:</div>
<div class="t link" style="left:140px;top:623px;color:#2a55b0;text-decoration:underline">выбрать</div>

<div class="t" style="left:614px;top:589px;color:#444">Скидка руч.:</div>
<div class="inp" style="left:695px;top:585px;width:70px;text-align:right;padding-right:25px">0,00<div class="vs" style="left:48px"></div></div>
<svg style="left:748px;top:592px" width="10" height="10" viewBox="0 0 10 10"><rect x="0.5" y="0.5" width="9" height="9" fill="#fff" stroke="#555"/><rect x="1" y="1" width="8" height="2.5" fill="#555"/><g fill="#555"><rect x="2" y="5" width="1.5" height="1.2"/><rect x="4.3" y="5" width="1.5" height="1.2"/><rect x="6.6" y="5" width="1.5" height="1.2"/><rect x="2" y="7.2" width="1.5" height="1.2"/><rect x="4.3" y="7.2" width="1.5" height="1.2"/><rect x="6.6" y="7.2" width="1.5" height="1.2"/></g></svg>
<div class="t" style="left:775px;top:589px;color:#333">%</div>
<div class="inp" style="left:615px;top:619px;width:150px;text-align:right;padding-right:25px">0,00<div class="vs" style="left:128px"></div></div>
<svg style="left:748px;top:626px" width="10" height="10" viewBox="0 0 10 10"><rect x="0.5" y="0.5" width="9" height="9" fill="#fff" stroke="#555"/><rect x="1" y="1" width="8" height="2.5" fill="#555"/><g fill="#555"><rect x="2" y="5" width="1.5" height="1.2"/><rect x="4.3" y="5" width="1.5" height="1.2"/><rect x="6.6" y="5" width="1.5" height="1.2"/><rect x="2" y="7.2" width="1.5" height="1.2"/><rect x="4.3" y="7.2" width="1.5" height="1.2"/><rect x="6.6" y="7.2" width="1.5" height="1.2"/></g></svg>

<div class="a" style="left:815px;top:580px;width:184px;height:69px;background:#dbdbdb"></div>
<div class="a" style="left:864px;top:585px;width:130px;height:25px;border:1px solid #d6d6d6"></div>
<div class="a" style="left:864px;top:619px;width:130px;height:25px;border:1px solid #d6d6d6"></div>
<div class="t" style="left:828px;top:589px;color:#444">НДС:</div>
<div class="t" style="left:820px;top:623px;color:#444">Всего:</div>
<div class="t" style="left:966px;top:589px;color:#333">0,00</div>
<div class="t" style="left:927px;top:623px;color:#333">215 155,00</div>
</body></html>
